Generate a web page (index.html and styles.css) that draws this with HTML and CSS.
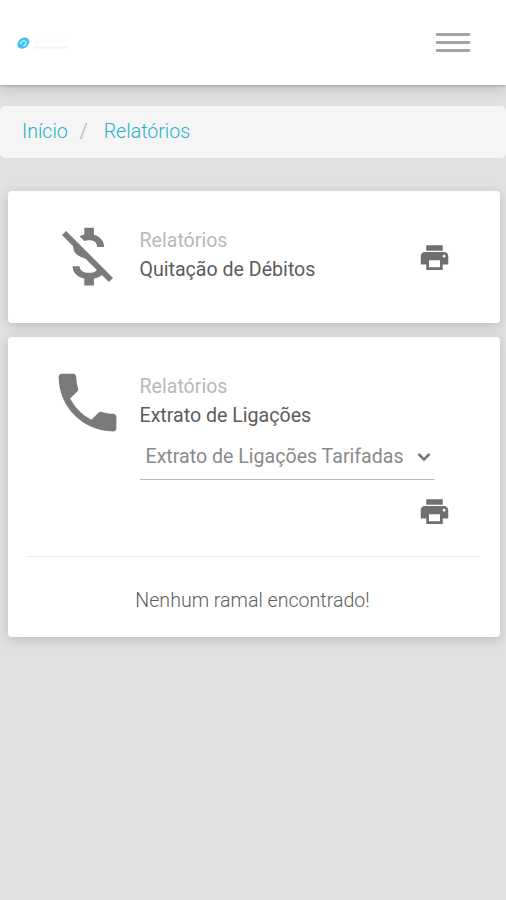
FILE: index.html
```html
<!DOCTYPE html>
<html lang="pt-BR">
<head>
    <meta charset="UTF-8">
    <meta name="viewport" content="width=device-width, initial-scale=1.0">
    <title>Relatórios</title>
    <link rel="stylesheet" href="styles.css">
</head>
<body>
    <header class="navbar">
        <svg class="logo" viewBox="0 0 54 16" aria-hidden="true">
            <g transform="rotate(-40 6.5 8)">
                <ellipse cx="6.3" cy="8" rx="6.6" ry="5" fill="#42c2f0"/>
                <path d="M3.5 7C5.5 5 8 5.5 9 7.5M4.5 10C6.5 11 9 10 9.5 8" fill="none" stroke="#d6f2fc" stroke-width="1.1"/>
            </g>
            <path d="M17 6h32" stroke="#fcfcff" stroke-width="5"/>
            <path d="M16 12.5h35" stroke="#f2f3f9" stroke-width="2"/>
        </svg>
        <button class="toggler" aria-label="Menu">
            <span></span>
            <span></span>
            <span></span>
        </button>
    </header>

    <nav class="breadcrumb">
        <a href="#">Início</a>
        <span class="separator">/</span>
        <a href="#">Relatórios</a>
    </nav>

    <main class="content">
        <section class="card card-debitos">
            <div class="report">
                <svg class="icon" viewBox="0 0 24 24"><path d="M12.5 6.9c1.78 0 2.44.85 2.5 2.1h2.21c-.07-1.72-1.12-3.3-3.21-3.81V3h-3v2.16c-.53.12-1.03.3-1.48.54l1.47 1.47c.41-.17.91-.27 1.51-.27zM5.33 4.06L4.06 5.33 7.5 8.77c0 2.08 1.56 3.21 3.91 3.91l3.51 3.51c-.34.48-1.05.91-2.42.91-2.06 0-2.87-.92-2.98-2.1h-2.2c.12 2.19 1.76 3.42 3.68 3.83V21h3v-2.15c.96-.18 1.83-.55 2.46-1.12l2.22 2.22 1.27-1.27L5.33 4.06z"/></svg>
                <div class="info">
                    <p class="category">Relatórios</p>
                    <p class="title">Quitação de Débitos</p>
                </div>
                <button class="print" aria-label="Imprimir">
                    <svg viewBox="0 0 24 24"><path d="M19 8H5c-1.66 0-3 1.34-3 3v6h4v4h12v-4h4v-6c0-1.66-1.34-3-3-3zm-3 11H8v-5h8v5zm3-7c-.55 0-1-.45-1-1s.45-1 1-1 1 .45 1 1-.45 1-1 1zm-1-9H6v4h12V3z"/></svg>
                </button>
            </div>
        </section>

        <section class="card card-ligacoes">
            <div class="report">
                <svg class="icon" viewBox="0 0 24 24"><path d="M6.62 10.79c1.44 2.83 3.76 5.14 6.59 6.59l2.2-2.2c.27-.27.67-.36 1.02-.24 1.12.37 2.33.57 3.57.57.55 0 1 .45 1 1V20c0 .55-.45 1-1 1-9.39 0-17-7.61-17-17 0-.55.45-1 1-1h3.5c.55 0 1 .45 1 1 0 1.25.2 2.45.57 3.57.11.35.03.74-.25 1.02l-2.2 2.2z"/></svg>
                <div class="info">
                    <p class="category">Relatórios</p>
                    <p class="title">Extrato de Ligações</p>
                    <div class="select">
                        <span>Extrato de Ligações Tarifadas</span>
                        <svg class="arrow" viewBox="0 0 14 10"><path d="M1.5 2l5.5 5.5L12.5 2"/></svg>
                    </div>
                </div>
            </div>
            <button class="print" aria-label="Imprimir">
                <svg viewBox="0 0 24 24"><path d="M19 8H5c-1.66 0-3 1.34-3 3v6h4v4h12v-4h4v-6c0-1.66-1.34-3-3-3zm-3 11H8v-5h8v5zm3-7c-.55 0-1-.45-1-1s.45-1 1-1 1 .45 1 1-.45 1-1 1zm-1-9H6v4h12V3z"/></svg>
            </button>
            <p class="empty">Nenhum ramal encontrado!</p>
        </section>
    </main>
</body>
</html>
```
FILE: styles.css
```css
* {
    box-sizing: border-box;
}
body {
    margin: 0;
    min-height: 100vh;
    background-color: #e1e1e1;
    font-family: Roboto, "Liberation Sans", sans-serif;
    font-size: 19.6px;
    line-height: 29.5px;
}
p {
    margin: 0;
}
button {
    padding: 0;
    border: none;
    background: none;
    cursor: pointer;
}
.navbar {
    display: flex;
    align-items: center;
    justify-content: space-between;
    height: 85px;
    padding: 0 36px 0 17px;
    background-color: #fff;
    box-shadow: 0 1px 3px rgba(0, 0, 0, .2), 0 4px 14px rgba(0, 0, 0, .14);
}
.logo {
    width: 54px;
    height: 16px;
}
.toggler {
    display: flex;
    flex-direction: column;
    gap: 5px;
    width: 34px;
}
.toggler span {
    height: 3px;
    border-radius: 1px;
    background-color: #a3a3a3;
}
.breadcrumb {
    display: flex;
    align-items: center;
    height: 52px;
    margin-top: 21px;
    padding: 0 22px;
    border-radius: 5px;
    background-color: #f5f5f5;
    font-weight: 300;
}
.breadcrumb a {
    color: #1fb2c8;
    text-decoration: none;
}
.separator {
    margin: 0 16px 0 12px;
    color: #aaa;
}
.content {
    display: flex;
    flex-direction: column;
    gap: 14px;
    padding: 32.5px 6.5px 0 7.5px;
}
.card {
    border-radius: 4px;
    background-color: #fff;
    box-shadow: 0 3px 12px rgba(0, 0, 0, .16);
}
.card-debitos {
    height: 132px;
    padding: 27px 49px 0 41px;
}
.card-ligacoes {
    height: 300px;
    padding: 27px 21px 0 19px;
}
.report {
    display: flex;
}
.card-ligacoes .report {
    padding: 0 44px 0 22px;
}
.icon {
    flex: none;
    width: 77px;
    height: 77px;
    fill: #7a7a7a;
}
.info {
    flex: 1;
    margin-left: 14px;
    padding-top: 8px;
}
.category {
    color: #b8b8b8;
}
.title {
    color: #5c5c5c;
}
.select {
    display: flex;
    align-items: center;
    justify-content: space-between;
    height: 49px;
    padding: 4px 4px 0 6px;
    border-bottom: 1px solid #b8b8b8;
    color: #8a8a8a;
    white-space: nowrap;
}
.arrow {
    width: 14px;
    height: 10px;
    fill: none;
    stroke: #777;
    stroke-width: 2.5;
}
.print {
    width: 33px;
    height: 33px;
}
.print svg {
    display: block;
    fill: #6f6f6f;
}
.card-debitos .print {
    margin-top: 23px;
}
.card-ligacoes .print {
    display: block;
    margin: 15px 28px 28px auto;
}
.empty {
    padding-top: 29px;
    border-top: 1px solid #e6e6e6;
    color: #606060;
    font-weight: 300;
    text-align: center;
}
```
